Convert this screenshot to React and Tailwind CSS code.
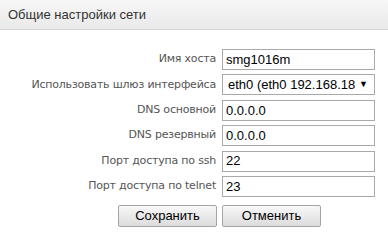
import React from "react";

const rows = [
  { label: "Имя хоста", value: "smg1016m" },
  { label: "Использовать шлюз интерфейса", value: "eth0 (eth0 192.168.18", select: true },
  { label: "DNS основной", value: "0.0.0.0" },
  { label: "DNS резервный", value: "0.0.0.0" },
  { label: "Порт доступа по ssh", value: "22" },
  { label: "Порт доступа по telnet", value: "23" },
];

export default function App() {
  return (
    <div className="w-[388px] h-[241px] bg-white overflow-hidden">
      {/* Header */}
      <div className="h-[30px] border-b border-[#d4d4d4] bg-gradient-to-b from-[#f7f7f7] to-[#e9e9e9] flex items-center pl-[8px]">
        <span className="text-[13px] text-[#333] font-['Liberation_Sans',sans-serif]">
          Общие настройки сети
        </span>
      </div>

      {/* Form */}
      <div className="pt-[19px] flex flex-col gap-[4.4px]">
        {rows.map((row) => (
          <div key={row.label} className="flex items-center h-[21px]">
            <div className="w-[218px] pr-[2px] text-right text-[11px] text-[#555] tracking-[-0.2px] font-['DejaVu_Sans',sans-serif] whitespace-nowrap">
              {row.label}
            </div>
            <div className="ml-[4px] w-[153px] h-[21px] border border-[#a9a9a9] bg-white flex items-center pl-[3px] pr-[6px] font-['Liberation_Sans',sans-serif] text-[13px] text-black">
              {row.select ? (
                <>
                  <span className="flex-1 pl-[2px] whitespace-nowrap overflow-hidden">{row.value}</span>
                  <span className="text-[9px] ml-[4px]">▼</span>
                </>
              ) : (
                <span>{row.value}</span>
              )}
            </div>
          </div>
        ))}
      </div>

      {/* Buttons */}
      <div className="mt-[8px] flex pl-[118px] gap-[5px]">
        <button className="w-[99px] h-[22px] border border-[#a5a5a5] rounded-[2px] bg-gradient-to-b from-[#f8f8f8] to-[#dcdcdc] text-[13px] text-black font-['Liberation_Sans',sans-serif]">
          Сохранить
        </button>
        <button className="w-[99px] h-[22px] border border-[#a5a5a5] rounded-[2px] bg-gradient-to-b from-[#f8f8f8] to-[#dcdcdc] text-[13px] text-black font-['Liberation_Sans',sans-serif]">
          Отменить
        </button>
      </div>
    </div>
  );
}
